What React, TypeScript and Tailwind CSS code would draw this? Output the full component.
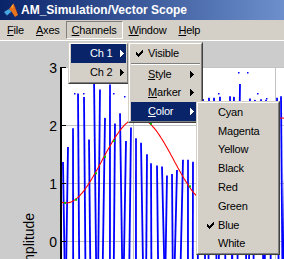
import React from "react";

const CheckMark = ({ color = "#000" }: { color?: string }) => (
  <svg width="7" height="7" viewBox="0 0 7 7" shapeRendering="crispEdges">
    <path
      d="M6 0h1v1h-1z M5 1h2v1h-2z M0 2h1v1h-1z M4 2h3v1h-3z M0 3h2v1h-2z M3 3h3v1h-3z M0 4h5v1h-5z M1 5h3v1h-3z M2 6h1v1h-1z"
      fill={color}
    />
  </svg>
);

const Arrow = ({ color = "#000" }: { color?: string }) => (
  <svg width="4" height="7" viewBox="0 0 4 7" shapeRendering="crispEdges">
    <path
      d="M0 0h1v1h-1z M0 1h2v1h-2z M0 2h3v1h-3z M0 3h4v1h-4z M0 4h3v1h-3z M0 5h2v1h-2z M0 6h1v1h-1z"
      fill={color}
    />
  </svg>
);

const MatlabIcon = () => (
  <svg width="16" height="16" viewBox="0 0 16 16">
    <polygon points="1,10 6,7 8.5,9.5 4,13.5" fill="#4aa8e0" />
    <polygon points="1,10 4,13.5 3,13" fill="#1d5f9a" />
    <polygon points="6,7 10.5,1.5 15,13 12,15 8.5,9.5" fill="#e8731b" />
    <polygon points="10.5,1.5 12,4 15,13" fill="#a8300e" />
    <polygon points="8,5 10.5,1.5 9.5,6" fill="#f8b040" />
  </svg>
);

function Panel({ className, children }: { className: string; children: React.ReactNode }) {
  return (
    <div
      className={`absolute bg-[#d4d0c8] border border-t-[#d4d0c8] border-l-[#d4d0c8] border-r-[#404040] border-b-[#404040] ${className}`}
    >
      <div className="border border-t-white border-l-white border-r-[#808080] border-b-[#808080] px-[1px]">
        {children}
      </div>
    </div>
  );
}

const hash = (k: number) => {
  const s = Math.sin(k * 12.9898) * 43758.5453;
  return s - Math.floor(s);
};

function Figure() {
  const lines: { x: number; top: number; xb: number }[] = [];
  for (let k = 0; k < 44; k++) {
    const x = Math.round(63 + 5.2 * k + (hash(k + 200) - 0.5) * 1.6);
    if (x > 286) break;
    const env = 2.2 + 0.65 * Math.cos((2 * Math.PI * (x - 100)) / 145);
    let r = 0.55 + 0.45 * hash(k + 7);
    if (x >= 130 && x <= 200) r = 0.72 + 0.15 * hash(k + 7);
    let top = 241 - 58 * env * r;
    if (x > 200) top = 96 + 10 * hash(k + 31);
    if (x > 234 && x < 241) top = 84;
    const xb = x + (hash(k + 90) - 0.5) * 5;
    lines.push({ x, top, xb });
  }
  const redY = (x: number) => 160.5 + 42.5 * Math.cos((2 * Math.PI * (x - 66)) / 144);
  const red: string[] = [];
  for (let x = 61; x <= 285; x += 1) red.push(`${x},${redY(x).toFixed(1)}`);
  const greens = [64, 75, 95, 104, 113, 150, 189, 240, 262];
  const dots: [number, number][] = [
    [74, 93],
    [83, 93],
    [113, 93],
    [124, 96],
    [238, 72],
    [247, 72],
    [218, 93],
    [257, 93],
    [266, 98],
  ];
  return (
    <svg width="284" height="218" viewBox="0 41 284 218" className="block shrink-0">
      <defs>
        <clipPath id="ax">
          <rect x="61" y="67" width="230" height="200" />
        </clipPath>
      </defs>
      <rect x="61" y="67" width="230" height="200" fill="#ffffff" />
      <g stroke="#c4c4c4" strokeWidth="1" shapeRendering="crispEdges">
        <line x1="61" y1="67.5" x2="284" y2="67.5" />
        <line x1="61" y1="125.5" x2="284" y2="125.5" />
        <line x1="61" y1="183.5" x2="284" y2="183.5" />
        <line x1="61" y1="241.5" x2="284" y2="241.5" />
        <line x1="133.5" y1="67" x2="133.5" y2="259" />
        <line x1="275.5" y1="67" x2="275.5" y2="259" />
      </g>
      <g clipPath="url(#ax)">
        <g stroke="#0000ff" strokeWidth="1.8">
          {lines.map((l, i) => (
            <line key={i} x1={l.x} y1={l.top} x2={l.xb} y2={262} />
          ))}
        </g>
        {dots.map(([x, y], i) => (
          <rect key={i} x={x} y={y} width="1.5" height="1.5" fill="#0000ff" />
        ))}
        <polyline points={red.join(" ")} fill="none" stroke="#ff0000" strokeWidth="1.1" />
        {greens.map((x, i) => (
          <rect key={i} x={x} y={redY(x) - 1} width="2" height="2" fill="#00c000" />
        ))}
      </g>
      <g stroke="#000" shapeRendering="crispEdges">
        <line x1="61" y1="67" x2="61" y2="259" strokeWidth="2" />
        <line x1="61" y1="67.5" x2="66" y2="67.5" />
        <line x1="61" y1="125.5" x2="66" y2="125.5" />
        <line x1="61" y1="183.5" x2="66" y2="183.5" />
        <line x1="61" y1="241.5" x2="66" y2="241.5" />
      </g>
      <g fill="#000" fontSize="14" fontFamily="'Liberation Sans', Arial, sans-serif" textAnchor="end">
        <text x="57" y="73">3</text>
        <text x="57" y="131">2</text>
        <text x="57" y="189">1</text>
        <text x="57" y="247">0</text>
        <text transform="translate(34,244) rotate(-90)" textAnchor="middle">
          Amplitude
        </text>
      </g>
    </svg>
  );
}

export default function App() {
  return (
    <div className="w-[284px] h-[259px] overflow-hidden relative bg-[#cccccc] flex flex-col font-['Liberation_Sans',Arial,sans-serif] text-black">
      <div className="h-[20px] shrink-0 flex items-center pl-[3px] gap-[2px] bg-[linear-gradient(to_right,#0a246a,#6d90cc)]">
        <MatlabIcon />
        <span className="text-white font-bold text-[12px] leading-none whitespace-nowrap">
          AM_Simulation/Vector Scope
        </span>
      </div>
      <div className="h-[20px] shrink-0 bg-[#d4d0c8] flex items-center pl-[1px] text-[11px] tracking-[-0.2px] leading-none">
        <div className="h-[18px] flex items-center px-[6px]">
          <span className="underline">F</span>ile
        </div>
        <div className="h-[18px] flex items-center px-[6px]">
          <span className="underline">A</span>xes
        </div>
        <div className="h-[18px] flex items-center px-[5px] border border-t-[#808080] border-l-[#808080] border-r-white border-b-white">
          <span className="underline">C</span>hannels
        </div>
        <div className="h-[18px] flex items-center px-[6px]">
          <span className="underline">W</span>indow
        </div>
        <div className="h-[18px] flex items-center px-[6px]">
          <span className="underline">H</span>elp
        </div>
      </div>
      <div className="h-[1px] shrink-0 bg-white" />
      <Figure />

      {/* Channels dropdown */}
      <Panel className="left-[68px] top-[42px] w-[61px] text-[11px] tracking-[-0.2px] leading-none">
        <div className="h-[18.8px] flex items-center pl-[19px] bg-[#0a246a] text-white">
          <span>Ch 1</span>
          <span className="flex-1" />
          <span className="mr-[2px] flex"><Arrow color="#fff" /></span>
        </div>
        <div className="h-[18.8px] flex items-center pl-[19px]">
          <span>Ch 2</span>
          <span className="flex-1" />
          <span className="mr-[2px] flex"><Arrow /></span>
        </div>
      </Panel>

      {/* Ch 1 submenu */}
      <Panel className="left-[128px] top-[42px] w-[75px] text-[11px] tracking-[-0.2px] leading-none">
        <div className="h-[18.8px] flex items-center pl-[5px]">
          <span className="w-[12px] flex"><CheckMark /></span>
          <span>Visible</span>
        </div>
        <div className="h-[2px] border-t border-t-[#808080] border-b border-b-white" />
        <div className="h-[18.8px] flex items-center pl-[17px]">
          <span><span className="underline">S</span>tyle</span>
          <span className="flex-1" />
          <span className="mr-[6px] flex"><Arrow /></span>
        </div>
        <div className="h-[18.8px] flex items-center pl-[17px]">
          <span><span className="underline">M</span>arker</span>
          <span className="flex-1" />
          <span className="mr-[6px] flex"><Arrow /></span>
        </div>
        <div className="h-[18.8px] flex items-center pl-[17px] bg-[#0a246a] text-white">
          <span><span className="underline">C</span>olor</span>
          <span className="flex-1" />
          <span className="mr-[6px] flex"><Arrow color="#fff" /></span>
        </div>
      </Panel>

      {/* Color submenu */}
      <Panel className="left-[196px] top-[101px] w-[84px] text-[11px] tracking-[-0.2px] leading-none">
        {["Cyan", "Magenta", "Yellow", "Black", "Red", "Green", "Blue", "White"].map((c) => (
          <div key={c} className="h-[18.8px] flex items-center pl-[8px]">
            <span className="w-[11px] flex">{c === "Blue" ? <CheckMark /> : null}</span>
            <span>{c}</span>
          </div>
        ))}
      </Panel>
    </div>
  );
}
